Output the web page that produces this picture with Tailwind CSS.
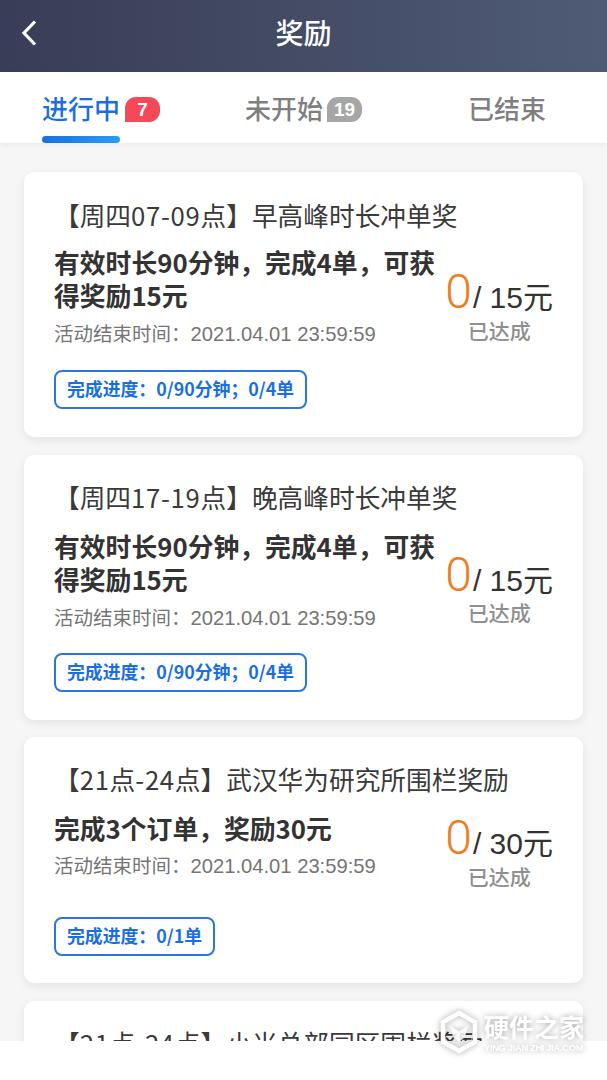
<!DOCTYPE html>
<html>
<head>
  <meta charset="UTF-8">
  <meta name="viewport" content="width=device-width, initial-scale=1.0">
  <title>奖励</title>
  <script src="https://cdn.jsdelivr.net/npm/@tailwindcss/browser@4"></script>
</head>
<body class="bg-white font-['Noto_Sans_CJK_SC','Noto_Sans',sans-serif]">
<div class="relative w-[607px] h-[1080px] overflow-hidden bg-white">

  <!-- header -->
  <div class="relative h-[72px] flex items-center justify-center bg-gradient-to-r from-[#393d57] to-[#4f5b75]">
    <svg class="absolute left-[20px] top-[19px]" width="18" height="28" viewBox="0 0 18 28" fill="none">
      <path d="M15 2.5 L4 14 L15 25.5" stroke="#fff" stroke-width="3.2"/>
    </svg>
    <span class="text-[28px] leading-none font-medium text-white -mt-[8px]">奖励</span>
  </div>

  <!-- tabs -->
  <div class="relative h-[71px] bg-white shadow-[0_2px_6px_rgba(0,0,0,0.05)] z-10">
    <div class="absolute left-[42px] top-[18px] flex items-center">
      <span class="text-[26px] leading-[36px] font-medium text-[#1a6fe0]">进行中</span>
      <span class="ml-[5px] mt-[2px] w-[35px] h-[25px] bg-[#f5495a] text-white text-[19px] font-semibold leading-[25px] text-center rounded-[11px] rounded-bl-none font-['Liberation_Sans']">7</span>
    </div>
    <div class="absolute left-[42px] top-[64px] w-[78px] h-[7px] rounded-full bg-gradient-to-r from-[#1a6fe0] to-[#2b9bfa]"></div>
    <div class="absolute left-[245px] top-[18px] flex items-center">
      <span class="text-[26px] leading-[36px] font-medium text-[#7f7f7f]">未开始</span>
      <span class="ml-[4px] mt-[2px] w-[35px] h-[25px] bg-[#a6a6a6] text-white text-[19px] font-semibold leading-[25px] text-center rounded-[11px] rounded-bl-none font-['Liberation_Sans']">19</span>
    </div>
    <div class="absolute left-[468px] top-[18px]">
      <span class="text-[26px] leading-[36px] font-medium text-[#7f7f7f]">已结束</span>
    </div>
  </div>

  <!-- list -->
  <div class="h-[898px] overflow-hidden bg-[#f6f6f6] px-[24px] pt-[29px] flex flex-col gap-[17.5px]">

    <div class="relative shrink-0 h-[265px] bg-white rounded-[10px] shadow-[0_3px_10px_rgba(0,0,0,0.08)] pl-[30px] pt-[25px]">
      <div class="text-[25.7px] leading-[36px] text-[#3a3a3a]">【周四<span class="tracking-[0.7px]">07-09</span>点】早高峰时长冲单奖</div>
      <div class="mt-[12px] w-[385px] text-[25.8px] leading-[33px] font-bold text-[#333]">有效时长90分钟，完成4单，可获得奖励15元</div>
      <div class="mt-[7px] text-[19.5px] leading-[30px] text-[#757575]">活动结束时间：<span class="text-[20.2px] font-['Liberation_Sans']">2021.04.01 23:59:59</span></div>
      <div class="mt-[21px] inline-flex h-[39px] items-center px-[11px] rounded-[8px] border-2 border-[#2a78dc] text-[17.85px] leading-[30px] font-bold text-[#1a6fe0]"><span class="-mt-[3px]">完成进度：0/90分钟；0/4单</span></div>
      <div class="absolute right-[30px] top-[93px] flex flex-col items-center">
        <div class="flex items-baseline text-[#333]">
          <span class="mr-[1px] text-[48px] leading-[54px] font-[350] font-['Roboto'] text-[#ee7d22]">0</span><span class="text-[30px] leading-[54px] font-['Liberation_Sans','Noto_Sans_CJK_SC']">/ 15元</span>
        </div>
        <div class="-mt-[9px] text-[21px] leading-[28px] font-medium text-[#8f8f8f]">已达成</div>
      </div>
    </div>

    <div class="relative shrink-0 h-[265px] bg-white rounded-[10px] shadow-[0_3px_10px_rgba(0,0,0,0.08)] pl-[30px] pt-[24px]">
      <div class="text-[25.7px] leading-[36px] text-[#3a3a3a]">【周四<span class="tracking-[0.7px]">17-19</span>点】晚高峰时长冲单奖</div>
      <div class="mt-[14px] w-[385px] text-[25.8px] leading-[33px] font-bold text-[#333]">有效时长90分钟，完成4单，可获得奖励15元</div>
      <div class="mt-[7px] text-[19.5px] leading-[30px] text-[#757575]">活动结束时间：<span class="text-[20.2px] font-['Liberation_Sans']">2021.04.01 23:59:59</span></div>
      <div class="mt-[20px] inline-flex h-[39px] items-center px-[11px] rounded-[8px] border-2 border-[#2a78dc] text-[17.85px] leading-[30px] font-bold text-[#1a6fe0]"><span class="-mt-[3px]">完成进度：0/90分钟；0/4单</span></div>
      <div class="absolute right-[30px] top-[93px] flex flex-col items-center">
        <div class="flex items-baseline text-[#333]">
          <span class="mr-[1px] text-[48px] leading-[54px] font-[350] font-['Roboto'] text-[#ee7d22]">0</span><span class="text-[30px] leading-[54px] font-['Liberation_Sans','Noto_Sans_CJK_SC']">/ 15元</span>
        </div>
        <div class="-mt-[10px] text-[21px] leading-[28px] font-medium text-[#8f8f8f]">已达成</div>
      </div>
    </div>

    <div class="relative shrink-0 h-[246px] bg-white rounded-[10px] shadow-[0_3px_10px_rgba(0,0,0,0.08)] pl-[30px] pt-[24px]">
      <div class="text-[25.7px] leading-[36px] text-[#3a3a3a]">【<span class="tracking-[0.7px]">21</span>点<span class="tracking-[0.7px]">-24</span>点】武汉华为研究所围栏奖励</div>
      <div class="mt-[14px] text-[25.8px] leading-[33px] font-bold text-[#333]">完成3个订单，奖励30元</div>
      <div class="mt-[6px] text-[19.5px] leading-[30px] text-[#757575]">活动结束时间：<span class="text-[20.2px] font-['Liberation_Sans']">2021.04.01 23:59:59</span></div>
      <div class="mt-[36px] inline-flex h-[39px] items-center px-[11px] rounded-[8px] border-2 border-[#2a78dc] text-[17.85px] leading-[30px] font-bold text-[#1a6fe0]"><span class="-mt-[3px]">完成进度：0/1单</span></div>
      <div class="absolute right-[30px] top-[74px] flex flex-col items-center">
        <div class="flex items-baseline text-[#333]">
          <span class="mr-[1px] text-[48px] leading-[54px] font-[350] font-['Roboto'] text-[#ee7d22]">0</span><span class="text-[30px] leading-[54px] font-['Liberation_Sans','Noto_Sans_CJK_SC']">/ 30元</span>
        </div>
        <div class="-mt-[9px] text-[21px] leading-[28px] font-medium text-[#8f8f8f]">已达成</div>
      </div>
    </div>

    <div class="relative shrink-0 h-[200px] bg-white rounded-[10px] shadow-[0_3px_10px_rgba(0,0,0,0.08)] pl-[30px] pt-[24px]">
      <div class="text-[25.7px] leading-[36px] text-[#3a3a3a]">【<span class="tracking-[0.7px]">21</span>点<span class="tracking-[0.7px]">-24</span>点】小米总部园区围栏奖励</div>
    </div>
  </div>

  <!-- bottom strip, watermark -->
  <div class="absolute left-0 right-0 top-[1041px] h-[39px] bg-white z-20"></div>
  <div class="absolute left-[440px] top-[1010px] z-30 flex items-start gap-[6px] text-white drop-shadow-[0_0_3px_rgba(0,0,0,0.35)]">
    <svg width="38" height="44" viewBox="0 0 38 44" fill="none">
      <path d="M19 3 L35 12 L35 32 L19 41 L3 32 L3 12 Z" stroke="#fff" stroke-width="4.5"/>
      <path d="M10 16 L19 21 L28 16 L25 27 L19 32 L13 27 Z" fill="#fff" fill-opacity="0.85"/>
    </svg>
    <div class="flex flex-col">
      <span class="text-[25px] leading-[32px] font-bold">硬件之家</span>
      <span class="text-[9.3px] leading-[12px] tracking-[-0.3px] font-['Liberation_Sans'] font-bold whitespace-nowrap">YING JIAN ZHI JIA.COM</span>
    </div>
  </div>
</div>
</body>
</html>
